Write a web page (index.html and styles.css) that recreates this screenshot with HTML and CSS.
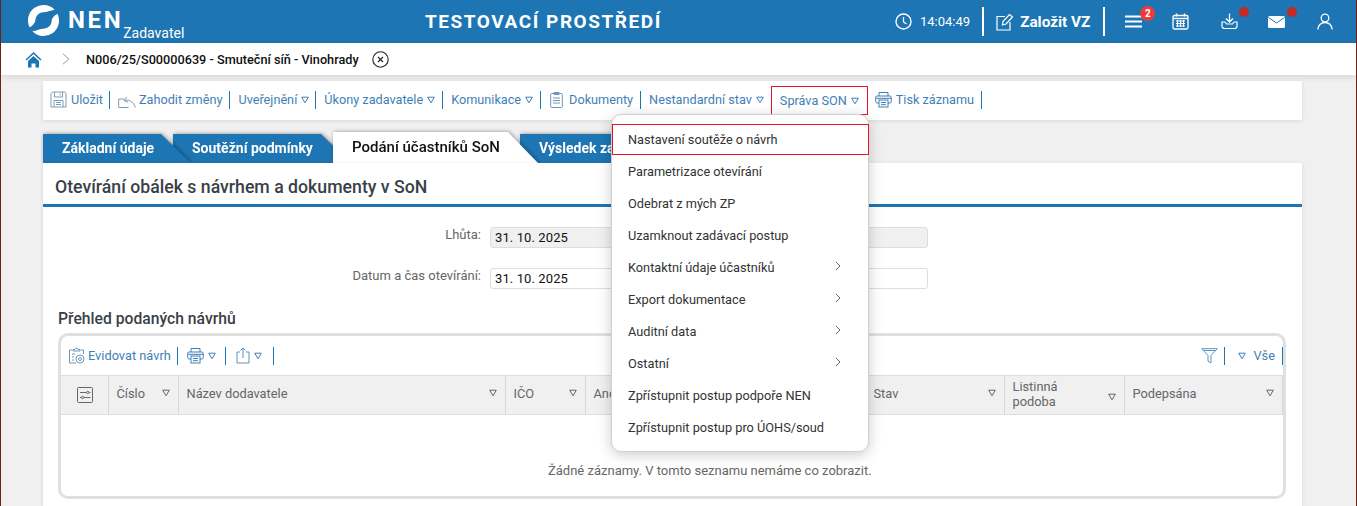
FILE: index.html
```html
<!DOCTYPE html>
<html lang="cs">
<head>
<meta charset="utf-8">
<title>NEN</title>
<link rel="stylesheet" href="styles.css">
</head>
<body>
<svg width="0" height="0" class="defs">
  <symbol id="tri" viewBox="0 0 8 8"><path d="M.7 1.200h6.600L4 6.800z" fill="none" stroke="currentColor"/></symbol>
  <symbol id="printer" viewBox="0 0 17 17"><g fill="none" stroke="currentColor"><path d="M4 5V1.500h9V5"/><rect x=".7" y="5" width="15.600" height="7" rx="1.500"/><rect x="4" y="9" width="9" height="7" fill="#fff"/><path d="M6 11.500h5M6 13.700h5M1 7.300h15"/></g></symbol>
</svg>
<header class="topbar">
  <div class="brand">
    <svg class="logo" viewBox="0 0 34 34"><g fill="#fff"><path d="M2.600 24A16 16 0 0 1 28.500 5.900C24 6.500 20.500 8.500 17 8.500A8.500 8.500 0 0 0 8.500 17C8.500 19 6 22.500 2.600 24Z"/><path d="M2.600 24A16 16 0 0 1 28.500 5.900C24 6.500 20.500 8.500 17 8.500A8.500 8.500 0 0 0 8.500 17C8.500 19 6 22.500 2.600 24Z" transform="rotate(180 17 17)"/></g></svg>
    <span class="nen">NEN</span>
    <span class="role">Zadavatel</span>
  </div>
  <div class="env">TESTOVACÍ PROSTŘEDÍ</div>
  <div class="top-actions">
    <svg class="ic-clock" viewBox="0 0 17 17"><circle cx="8.500" cy="8.500" r="7.500" fill="none" stroke="#fff" stroke-width="1.400"/><path d="M8.500 4v5l3 2" fill="none" stroke="#fff" stroke-width="1.300"/></svg>
    <span class="time">14:04:49</span>
    <span class="top-sep sep-a"></span>
    <svg class="ic-new" viewBox="0 0 18 18"><path d="M9 3.500H1v13.500h13V9" fill="none" stroke="#fff" stroke-width="1.200"/><path d="M7 8.500 13.500 1.500l3 2.500L10 11l-3.500 1z" fill="none" stroke="#fff" stroke-width="1.200"/></svg>
    <span class="new-label">Založit VZ</span>
    <span class="top-sep sep-b"></span>
    <span class="menu-wrap">
      <svg class="ic-menu" viewBox="0 0 17 13"><path d="M0 1.500h17M0 6.500h17M0 11.500h17" stroke="#fff" stroke-width="2"/></svg>
      <span class="badge">2</span>
    </span>
    <svg class="ic-cal" viewBox="0 0 17 17"><rect x="1" y="2.500" width="15" height="13.500" rx="1.500" fill="none" stroke="#fff" stroke-width="1.300"/><path d="M1 5.500h15M4.500 .5v3M12.500 .5v3" stroke="#fff" stroke-width="1.500"/><path d="M4 8h9M4 10.500h9M4 13h9M5.500 7v7M8.500 7v7M11.500 7v7" stroke="#fff" stroke-width="1.100"/></svg>
    <span class="dot-wrap dl">
      <svg class="ic-dl" viewBox="0 0 17 17"><path d="M8.500 .5v8M5 5.500l3.500 3.500L12 5.500" fill="none" stroke="#fff" stroke-width="1.300"/><path d="M4 9H1v4a2.500 2.500 0 0 0 2.500 2.500h10A2.500 2.500 0 0 0 16 13V9h-3l-1.500 2h-6z" fill="none" stroke="#fff" stroke-width="1.200"/></svg>
      <span class="dot"></span>
    </span>
    <span class="dot-wrap ml">
      <svg class="ic-mail" viewBox="0 0 17 12"><rect width="17" height="12" rx="1.500" fill="#fff"/><path d="M.5 1.500 8.500 7l8-5.500" fill="none" stroke="#1d75b3"/></svg>
      <span class="dot"></span>
    </span>
    <svg class="ic-user" viewBox="0 0 16 17"><circle cx="8" cy="5" r="3.800" fill="none" stroke="#fff" stroke-width="1.300"/><path d="M.8 16.500C1.500 11.500 4 9.500 8 9.500s6.500 2 7.200 7" fill="none" stroke="#fff" stroke-width="1.300"/></svg>
  </div>
</header>
<nav class="crumbs">
  <svg class="ic-home" viewBox="0 0 17 17"><path d="M8.500 1 .5 8.500l1 1L8.500 3l7 6.500 1-1z" fill="#1d75b3"/><path d="M3 10l5.500-5 5.500 5v6.500h-3.500v-4h-4v4H3z" fill="#1d75b3"/></svg>
  <svg class="ic-chev" viewBox="0 0 8 12"><path d="M1 .8 6.800 6 1 11.200" fill="none" stroke="#8a9aa8"/></svg>
  <strong class="crumb-text">N006/25/S00000639 - Smuteční síň - Vinohrady</strong>
  <svg class="ic-close" viewBox="0 0 17 17"><circle cx="8.500" cy="8.500" r="7.700" fill="none" stroke="#222" stroke-width="1.100"/><path d="M6 6l5 5M11 6l-5 5" stroke="#222" stroke-width="1.100"/></svg>
</nav>
<main class="content">
  <div class="toolbar">
    <a class="tb tb-first">
      <svg class="tb-ic" viewBox="0 0 17 17"><g fill="none" stroke="#7f9bb5"><path d="M1 2.500 2.500 1h12.200L16 2.300V16H1z"/><path d="M4.500 1v5h8V1M10 2.500v2M4 16v-6.500h9V16M6 11.500h5M6 13.500h5"/></g></svg>Uložit</a>
    <a class="tb tb-discard">
      <svg class="tb-ic tb-ic-w" viewBox="0 0 18 13"><g fill="none" stroke="#7f9bb5"><path d="M.7 4h5.500M.7 4v8.500h10M17.300 12.500C15.500 6.500 11 4 6.500 5.500M9 2 6 5.500l4 1.700"/></g></svg>Zahodit změny</a>
    <a class="tb tb-pub">Uveřejnění<svg class="tri"><use href="#tri"/></svg></a>
    <a class="tb">Úkony zadavatele<svg class="tri"><use href="#tri"/></svg></a>
    <a class="tb">Komunikace<svg class="tri"><use href="#tri"/></svg></a>
    <a class="tb">
      <svg class="tb-ic tb-ic-doc" viewBox="0 0 13 17"><g fill="none" stroke="#6f97bb"><rect x=".7" y="2.500" width="11.600" height="14" rx="1"/><path d="M4 3.500V1.500h5v2zM3 7h7M3 9.500h7M3 12h7"/></g></svg>Dokumenty</a>
    <a class="tb tb-nostate">Nestandardní stav<svg class="tri"><use href="#tri"/></svg></a>
    <a class="tb tb-active">Správa SON<svg class="tri"><use href="#tri"/></svg></a>
    <a class="tb tb-print"><svg class="tb-ic print-ic"><use href="#printer"/></svg>Tisk záznamu</a>
  </div>

  <div class="tabs">
    <div class="tab t1">Základní údaje</div>
    <div class="tab t2">Soutěžní podmínky</div>
    <div class="tab t3">Podání účastníků SoN</div>
    <div class="tab t4">Výsledek zadávání</div>
  </div>

  <section class="panel">
    <h1 class="panel-title">Otevírání obálek s návrhem a dokumenty v SoN</h1>
    <div class="form">
      <div class="form-row">
        <label class="form-label">Lhůta:</label>
        <div class="field field-ro">31. 10. 2025</div>
      </div>
      <div class="form-row">
        <label class="form-label">Datum a čas otevírání:</label>
        <div class="field">31. 10. 2025</div>
      </div>
    </div>
    <h2 class="sub-title">Přehled podaných návrhů</h2>
    <div class="grid-box">
      <div class="grid-tools">
        <a class="gt gt-first">
          <svg class="gt-ic" viewBox="0 0 17 17"><g fill="none" stroke="#6f97bb"><path d="M4 3H1.500v13H8M13 3h2.500v4M5 4V2.500h2a1.500 1.500 0 0 1 3 0h2V4z"/><path d="M4 7h3M4 10h2M4 13h2"/><circle cx="12" cy="12" r="1.500"/><circle cx="12" cy="12" r="4"/></g></svg>Evidovat návrh</a>
        <a class="gt gt-pr"><svg class="gt-print"><use href="#printer"/></svg><svg class="tri"><use href="#tri"/></svg></a>
        <a class="gt gt-export"><svg class="gt-ex" viewBox="0 0 14 17"><path d="M4 5H1v11h12V5h-3M7 11V1M4.500 3.500 7 1l2.500 2.500" fill="none" stroke="#5b93c2"/></svg><svg class="tri"><use href="#tri"/></svg></a>
        <span class="spacer"></span>
        <a class="gt gt-filter"><svg class="funnel" viewBox="0 0 17 16"><path d="M.7.7h15.600L10 7.500V15l-3-1.800V7.500zM3 2.500h11" fill="none" stroke="#5b93c2"/></svg></a>
        <a class="gt gt-all"><svg class="tri"><use href="#tri"/></svg>Vše</a>
      </div>
      <div class="grid-head">
        <div class="gh gh-ic"><svg class="cols-ic" viewBox="0 0 16 16"><g fill="none" stroke="#666"><rect x=".5" y=".5" width="15" height="15" rx="1"/><path d="M3 5.500h6.500M12 5.500h1.500M3 10.500h1.500M7 10.500h6.500"/><circle cx="10.800" cy="5.500" r="1.200"/><circle cx="5.700" cy="10.500" r="1.200"/></g></svg></div>
        <div class="gh">Číslo<svg class="tri"><use href="#tri"/></svg></div>
        <div class="gh">Název dodavatele<svg class="tri"><use href="#tri"/></svg></div>
        <div class="gh">IČO<svg class="tri"><use href="#tri"/></svg></div>
        <div class="gh">Anonymní<svg class="tri"><use href="#tri"/></svg></div>
        <div class="gh">Stav<svg class="tri"><use href="#tri"/></svg></div>
        <div class="gh gh-two"><span>Listinná podoba</span><svg class="tri"><use href="#tri"/></svg></div>
        <div class="gh">Podepsána<svg class="tri"><use href="#tri"/></svg></div>
      </div>
      <div class="grid-empty">Žádné záznamy. V tomto seznamu nemáme co zobrazit.</div>
    </div>
  </section>

  <div class="menu">
    <div class="menu-item menu-item-on">Nastavení soutěže o návrh</div>
    <div class="menu-item">Parametrizace otevírání</div>
    <div class="menu-item">Odebrat z mých ZP</div>
    <div class="menu-item">Uzamknout zadávací postup</div>
    <div class="menu-item">Kontaktní údaje účastníků<svg class="menu-arr" viewBox="0 0 6 10"><path d="M1 1l4 4-4 4" fill="none" stroke="#666"/></svg></div>
    <div class="menu-item">Export dokumentace<svg class="menu-arr" viewBox="0 0 6 10"><path d="M1 1l4 4-4 4" fill="none" stroke="#666"/></svg></div>
    <div class="menu-item">Auditní data<svg class="menu-arr" viewBox="0 0 6 10"><path d="M1 1l4 4-4 4" fill="none" stroke="#666"/></svg></div>
    <div class="menu-item">Ostatní<svg class="menu-arr" viewBox="0 0 6 10"><path d="M1 1l4 4-4 4" fill="none" stroke="#666"/></svg></div>
    <div class="menu-item">Zpřístupnit postup podpoře NEN</div>
    <div class="menu-item">Zpřístupnit postup pro ÚOHS/soud</div>
  </div>
</main>
</body>
</html>
```
FILE: styles.css
```css
* { box-sizing: border-box; }
html, body { margin: 0; height: 506px; overflow: hidden; }
body {
  position: relative;
  font-family: Roboto, "Liberation Sans", sans-serif;
  font-size: 13px;
  background: #f0f0f0;
  color: #333;
  border-left: 1px solid #6e2015;
  border-right: 1px solid #6e2015;
}
.defs { position: absolute; }

/* top bar */
.topbar {
  height: 43px;
  background: #1d75b3;
  color: #fff;
  display: flex;
  align-items: center;
}
.brand { width: 424px; display: flex; align-items: flex-start; padding-left: 26px; height: 43px; }
.logo { width: 33px; height: 33px; margin-top: 4px; flex: none; }
.nen { font-size: 24px; font-weight: 700; letter-spacing: 2.600px; margin: 6px 0 0 8px; line-height: 28px; }
.role { font-size: 14px; line-height: 16px; margin: 25px 0 0 0; }
.env { font-size: 19px; font-weight: 700; letter-spacing: 1.550px; width: 240px; white-space: nowrap; }
.top-actions { flex: 1; display: flex; align-items: center; height: 43px; padding-left: 230px; }
.ic-clock { width: 17px; height: 17px; flex: none; }
.time { margin-left: 8px; font-size: 13px; }
.top-sep { width: 2px; height: 29px; background: #fff; flex: none; }
.sep-a { margin: 0 12px 0 12px; }
.ic-new { width: 18px; height: 18px; flex: none; }
.new-label { font-size: 15.300px; font-weight: 700; margin-left: 6px; }
.sep-b { margin-left: 13px; }
.menu-wrap { position: relative; display: flex; margin-left: 20px; }
.ic-menu { width: 17px; height: 13px; }
.badge {
  position: absolute; left: 15px; top: -9px;
  width: 15px; height: 15px; border-radius: 50%;
  background: #ef3a3a; color: #fff;
  font-size: 10px; font-weight: 700; line-height: 15px; text-align: center;
}
.ic-cal { width: 17px; height: 17px; margin-left: 30px; flex: none; }
.dot-wrap { position: relative; display: flex; }
.dl { margin-left: 32px; }
.ml { margin-left: 30px; }
.ic-dl { width: 17px; height: 17px; }
.ic-mail { width: 17px; height: 12px; }
.dot {
  position: absolute; left: 18px; top: -6px;
  width: 10px; height: 10px; border-radius: 50%; background: #c62828;
}
.ml .dot { left: 19px; top: -9px; }
.ic-user { width: 16px; height: 17px; margin-left: 32px; flex: none; }

/* breadcrumb */
.crumbs {
  height: 32px; background: #fff;
  display: flex; align-items: center;
  padding-left: 24px;
  box-shadow: 0 2px 6px rgba(0,0,0,.12);
  position: relative;
}
.ic-home { width: 17px; height: 17px; flex: none; }
.ic-chev { width: 8px; height: 12px; margin-left: 20px; flex: none; }
.crumb-text { font-size: 12.700px; font-weight: 500; color: #111; margin-left: 16px; }
.ic-close { width: 17px; height: 17px; margin-left: 13px; flex: none; }

/* toolbar */
.content { position: relative; padding: 6px 54px 0 42px; }
.toolbar {
  height: 39px; background: #fff;
  display: flex; align-items: center;
  padding: 0 0 2px 7px;
  box-shadow: 0 1px 4px rgba(0,0,0,.1);
}
.tb {
  display: flex; align-items: center;
  height: 18px;
  padding: 0 7px 0 8px;
  border-right: 1px solid #1d75b3;
  color: #3f7fb6;
  font-size: 12.700px;
  white-space: nowrap;
}
.tb-first { padding: 0 6px 0 0; }
.tb-pub { padding-right: 6px; }
.tb-ic { width: 17px; height: 17px; margin-right: 4px; flex: none; }
.tb-ic-w { width: 18px; height: 13px; margin-top: 3px; margin-right: 3px; }
.tb-ic-doc { width: 13px; margin: 0 6px 0 1px; }
.tri { width: 8px; height: 8px; margin-left: 4px; color: #3f7fb6; flex: none; }
.tb-nostate { border-right: 0; padding-right: 7px; }
.tb-active {
  height: 29px;
  padding: 0 8px 0 8px;
  border: 1px solid #e3132c;
  margin-top: 2px;
}
.tb-print { padding: 0 7px 0 7px; }
.print-ic { color: #3f7fb6; }

/* tabs */
.tabs { display: flex; align-items: flex-end; height: 31px; margin-top: 12px; position: relative; }
.tab {
  position: relative;
  height: 29px;
  color: #fff;
  font-weight: 700;
  font-size: 14px;
  line-height: 29px;
  white-space: nowrap;
  filter: drop-shadow(1px 0 2px rgba(0,0,0,.4));
}
.tab::before {
  content: "";
  position: absolute; inset: 0;
  z-index: -1;
  background: #1d75b3;
  clip-path: polygon(0 0, calc(100% - 30px) 0, 100% 100%, 0 100%);
}
.t1 { width: 148px; padding-left: 19px; margin-right: -18px; z-index: 3; }
.t2 { width: 178px; padding-left: 19px; margin-right: -18px; z-index: 2; }
.t3 {
  width: 205px; height: 31px; padding-left: 19px; margin-right: -18px; z-index: 4;
  color: #111; font-weight: 500; font-size: 15px; line-height: 30px;
}
.t3::before { background: #fff; }
.t4 { width: 160px; padding-left: 19px; z-index: 1; }

/* panel */
.panel { background: #fff; height: 344px; box-shadow: 0 1px 4px rgba(0,0,0,.1); position: relative; z-index: 5; }
.panel-title {
  margin: 0; height: 44px;
  padding: 12px 0 0 12px;
  font-size: 17.700px; line-height: 24px; font-weight: 500;
  color: #3a3f47;
  border-bottom: 3px solid #1d75b3;
}
.form { padding-top: 20px; }
.form-row { display: flex; align-items: center; height: 21px; margin-bottom: 20px; }
.form-label { width: 438px; text-align: right; color: #666; font-size: 13px; padding-bottom: 7px; }
.field {
  margin-left: 9px; width: 438px; height: 21px;
  border: 1px solid #ddd; border-radius: 3px;
  padding-left: 4px;
  font-size: 13px; line-height: 19px; color: #111; letter-spacing: .1px;
}
.field-ro { background: #f0f0f0; }
.sub-title { margin: 0 0 4px 15px; font-size: 15.700px; line-height: 20px; font-weight: 500; color: #3a3f47; }

/* grid */
.grid-box {
  margin-left: 15px; width: 1228px; height: 166px;
  border: 3px solid #e0e0e0; border-radius: 10px;
  overflow: hidden;
}
.grid-tools { height: 39px; display: flex; align-items: center; padding-left: 7px; }
.gt {
  display: flex; align-items: center; height: 18px;
  padding: 0 6px 0 0; margin-right: 9px;
  border-right: 1px solid #1d75b3;
  color: #3f7fb6; font-size: 12.800px; white-space: nowrap;
}
.gt-ic { width: 17px; height: 17px; margin-right: 3px; }
.gt-print { width: 17px; height: 17px; color: #3f7fb6; }
.gt-pr { padding-right: 9px; margin-right: 10px; }
.gt-ex { width: 14px; height: 17px; }
.gt-export { padding-right: 11px; }
.gt .tri { margin-left: 4px; }
.spacer { flex: 1; }
.gt-filter { padding-right: 6px; margin-right: 13px; }
.funnel { width: 17px; height: 16px; }
.gt-all { margin-right: 0; padding-right: 7px; }
.gt-all .tri { margin: 0 7px 0 0; }
.grid-head {
  height: 40px; display: grid;
  grid-template-columns: 48px 70px 327px 80px 280px 139px 120px 158px;
  background: #f0f0f0;
  border-top: 1px solid #ddd; border-bottom: 1px solid #ddd;
}
.gh {
  display: flex; align-items: center; justify-content: space-between;
  padding: 0 8px 3px 7.500px;
  border-right: 1px solid #d8d8d8;
  color: #666; font-size: 12.800px;
  line-height: 15px;
}
.gh .tri { color: #666; margin-top: -2px; }
.gh-ic { justify-content: center; padding: 0; }
.cols-ic { width: 16px; height: 16px; }
.gh-two { padding-bottom: 2px; }
.gh-two .tri { margin-top: 6px; }
.gh-two span { width: 70px; }
.grid-empty { padding: 47px 0 0 487px; color: #666; font-size: 13px; line-height: 18px; white-space: nowrap; }

/* menu */
.menu {
  position: absolute; left: 610px; top: 39px;
  width: 258px; height: 338px;
  padding-top: 9px;
  background: #fff;
  border: 1px solid #d0d0d0;
  border-radius: 10px;
  box-shadow: 0 3px 14px rgba(0,0,0,.2);
  z-index: 10;
}
.menu-item {
  height: 32px; display: flex; align-items: center; justify-content: space-between;
  padding: 0 27px 2px 16px;
  font-size: 12.750px; color: #333;
}
.menu-item-on {
  height: 31px; margin-bottom: 1px;
  border: 1px solid #e3132c; padding: 0 0 1px 15px;
  width: 257px;
}
.menu-arr { width: 6px; height: 10px; margin-top: -3px; }
```
